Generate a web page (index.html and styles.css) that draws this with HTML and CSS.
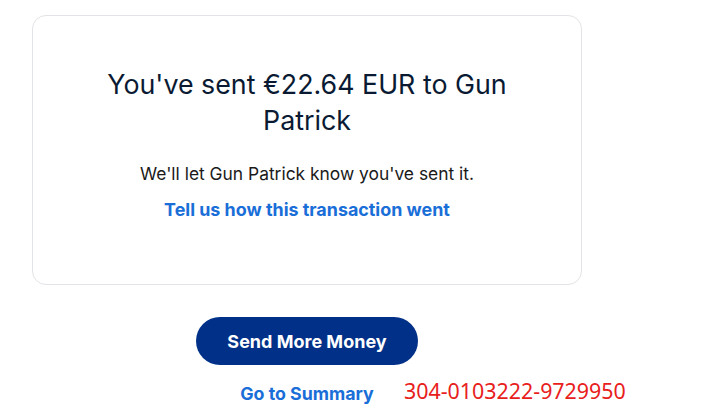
FILE: index.html
```html
<!DOCTYPE html>
<html lang="en">
<head>
    <meta charset="UTF-8">
    <meta name="viewport" content="width=device-width, initial-scale=1.0">
    <title>Payment sent</title>
    <link rel="stylesheet" href="styles.css">
</head>
<body>
    <div class="page">
        <div class="card">
            <h1>You've sent €22.64 EUR to Gun Patrick</h1>
            <p class="note">We'll let Gun Patrick know you've sent it.</p>
            <a class="link" href="#">Tell us how this transaction went</a>
        </div>
        <div class="actions">
            <button class="btn-primary">Send More Money</button>
            <a class="link summary" href="#">Go to Summary</a>
        </div>
    </div>
    <div class="ref-id">304-0103222-9729950</div>
</body>
</html>
```

FILE: styles.css
```css
body { margin: 0; background: #fff; font-family: Inter, "Liberation Sans", Arial, sans-serif; color: #001c3d; }
.page { width: 550px; margin-left: 32px; padding-top: 15px; }
.card { border: 1px solid #e2e3e6; border-radius: 14px; padding: 50px 50px 62px; text-align: center; }
h1 { font-weight: 400; font-size: 26.8px; line-height: 36px; margin: 0 0 24px; color: #0a1a33; }
.note { font-size: 17.4px; line-height: 24px; margin: 0 0 12px; color: #1a1a1a; }
.link { color: #1a6ed8; font-weight: 700; font-size: 17.9px; line-height: 24px; text-decoration: none; display: inline-block; }
.actions { display: flex; flex-direction: column; align-items: center; margin-top: 32px; }
.btn-primary { background: #003087; color: #fff; border: none; border-radius: 24px; width: 222px; height: 48px; font-family: inherit; font-weight: 700; font-size: 18px; }
.summary { margin-top: 17px; font-size: 17.8px; }
.ref-id { position: absolute; left: 404px; top: 376px; color: #e8201c; font-family: "Noto Sans", sans-serif; font-size: 21.4px; }
```
